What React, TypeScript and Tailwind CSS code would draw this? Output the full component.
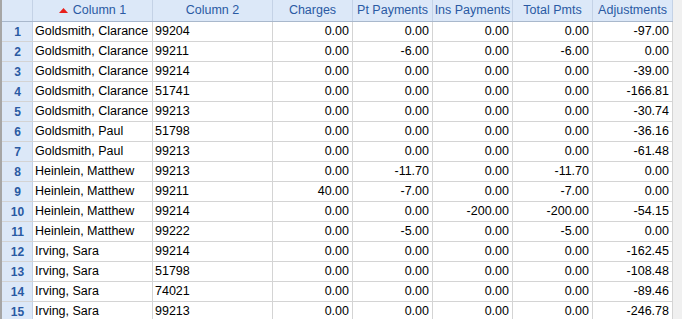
import React from "react";

const rows: [string, string, string, string, string, string, string][] = [
  ["Goldsmith, Clarance", "99204", "0.00", "0.00", "0.00", "0.00", "-97.00"],
  ["Goldsmith, Clarance", "99211", "0.00", "-6.00", "0.00", "-6.00", "0.00"],
  ["Goldsmith, Clarance", "99214", "0.00", "0.00", "0.00", "0.00", "-39.00"],
  ["Goldsmith, Clarance", "51741", "0.00", "0.00", "0.00", "0.00", "-166.81"],
  ["Goldsmith, Clarance", "99213", "0.00", "0.00", "0.00", "0.00", "-30.74"],
  ["Goldsmith, Paul", "51798", "0.00", "0.00", "0.00", "0.00", "-36.16"],
  ["Goldsmith, Paul", "99213", "0.00", "0.00", "0.00", "0.00", "-61.48"],
  ["Heinlein, Matthew", "99213", "0.00", "-11.70", "0.00", "-11.70", "0.00"],
  ["Heinlein, Matthew", "99211", "40.00", "-7.00", "0.00", "-7.00", "0.00"],
  ["Heinlein, Matthew", "99214", "0.00", "0.00", "-200.00", "-200.00", "-54.15"],
  ["Heinlein, Matthew", "99222", "0.00", "-5.00", "0.00", "-5.00", "0.00"],
  ["Irving, Sara", "99214", "0.00", "0.00", "0.00", "0.00", "-162.45"],
  ["Irving, Sara", "51798", "0.00", "0.00", "0.00", "0.00", "-108.48"],
  ["Irving, Sara", "74021", "0.00", "0.00", "0.00", "0.00", "-89.46"],
  ["Irving, Sara", "99213", "0.00", "0.00", "0.00", "0.00", "-246.78"],
];

const headers = ["Column 2", "Charges", "Pt Payments", "Ins Payments", "Total Pmts", "Adjustments"];

export default function App() {
  return (
    <div
      className="w-[682px] h-[319px] overflow-hidden bg-[#f0f0f0] flex text-[12.5px] leading-none"
      style={{ fontFamily: '"Liberation Sans", Arial, sans-serif' }}
    >
      <div className="w-[673px] shrink-0 bg-white border-l-2 border-[#a6a6a6] flex flex-col">
        <div className="flex h-[22px] shrink-0 bg-[#dce8f8] border-b border-[#a9b8cc] text-[#2a5aa3]">
          <div className="w-[31px] border-r border-[#c4d2e6]" />
          <div className="w-[120px] border-r border-[#c4d2e6] flex items-center justify-center gap-[5px]">
            <svg width="9" height="5" viewBox="0 0 9 5" className="mt-[-1px]">
              <polygon points="0,5 9,5 4.5,0" fill="#e8201c" />
            </svg>
            <span>Column 1</span>
          </div>
          {headers.map((h, i) => (
            <div
              key={h}
              className={`${i === 0 ? "w-[120px]" : "w-[80px]"} border-r border-[#c4d2e6] flex items-center justify-center whitespace-nowrap`}
            >
              {h}
            </div>
          ))}
        </div>
        {rows.map((r, idx) => (
          <div key={idx} className="flex h-[20px] shrink-0 border-b border-[#d4d4d4]">
            <div className="w-[31px] bg-[#dce8f8] border-r border-[#c4d2e6] flex items-center justify-center text-[#2a5aa3] font-bold text-[12px] pl-[1px]">
              {idx + 1}
            </div>
            <div className="w-[120px] border-r border-[#d4d4d4] flex items-center pl-[2px] text-black whitespace-nowrap">
              {r[0]}
            </div>
            <div className="w-[120px] border-r border-[#d4d4d4] flex items-center pl-[2px] text-black">
              {r[1]}
            </div>
            {r.slice(2).map((v, j) => (
              <div
                key={j}
                className="w-[80px] border-r border-[#d4d4d4] flex items-center justify-end pr-[3px] text-black"
              >
                {v}
              </div>
            ))}
          </div>
        ))}
      </div>
    </div>
  );
}
